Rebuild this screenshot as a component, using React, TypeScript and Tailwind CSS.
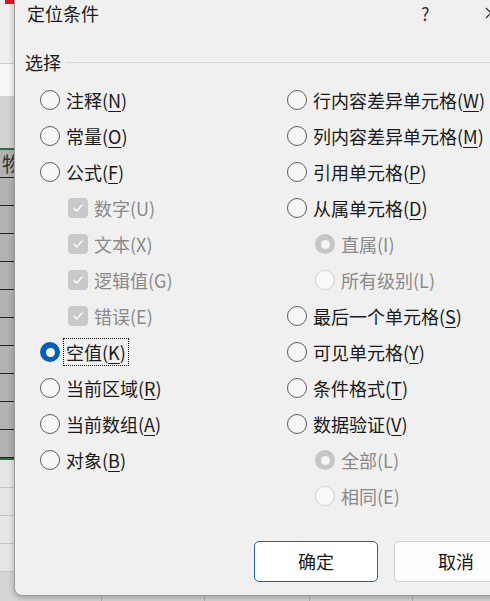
import React from "react";

type RState = "off" | "on" | "disOn" | "disOff";

function Radio({ state }: { state: RState }) {
  if (state === "on")
    return (
      <span className="flex h-[20px] w-[20px] shrink-0 items-center justify-center rounded-full bg-[#005fb8]">
        <span className="h-[9px] w-[9px] rounded-full bg-white" />
      </span>
    );
  if (state === "disOn")
    return (
      <span className="flex h-[20px] w-[20px] shrink-0 items-center justify-center rounded-full bg-[#c6c6c6]">
        <span className="h-[9px] w-[9px] rounded-full bg-[#f4f4f4]" />
      </span>
    );
  if (state === "disOff")
    return <span className="h-[20px] w-[20px] shrink-0 rounded-full border border-[#d2d2d2] bg-[#f9f9f9]" />;
  return <span className="h-[20px] w-[20px] shrink-0 rounded-full border border-[#5c5c5c] bg-[#f6f6f6]" />;
}

function Check() {
  return (
    <span className="flex h-[20px] w-[20px] shrink-0 items-center justify-center rounded-[4px] bg-[#c9c9c9]">
      <svg width="12" height="12" viewBox="0 0 12 12" fill="none">
        <path d="M2 6.3 L4.8 9 L10 3" stroke="#ffffff" strokeWidth="1.3" strokeLinecap="round" strokeLinejoin="round" />
      </svg>
    </span>
  );
}

type Item = {
  text: string;
  k: string;
  kind: "radio" | "check";
  state?: RState;
  sub?: boolean;
  dis?: boolean;
  focus?: boolean;
};

const left: Item[] = [
  { text: "注释", k: "N", kind: "radio", state: "off" },
  { text: "常量", k: "O", kind: "radio", state: "off" },
  { text: "公式", k: "F", kind: "radio", state: "off" },
  { text: "数字", k: "U", kind: "check", sub: true, dis: true },
  { text: "文本", k: "X", kind: "check", sub: true, dis: true },
  { text: "逻辑值", k: "G", kind: "check", sub: true, dis: true },
  { text: "错误", k: "E", kind: "check", sub: true, dis: true },
  { text: "空值", k: "K", kind: "radio", state: "on", focus: true },
  { text: "当前区域", k: "R", kind: "radio", state: "off" },
  { text: "当前数组", k: "A", kind: "radio", state: "off" },
  { text: "对象", k: "B", kind: "radio", state: "off" },
];

const right: Item[] = [
  { text: "行内容差异单元格", k: "W", kind: "radio", state: "off" },
  { text: "列内容差异单元格", k: "M", kind: "radio", state: "off" },
  { text: "引用单元格", k: "P", kind: "radio", state: "off" },
  { text: "从属单元格", k: "D", kind: "radio", state: "off" },
  { text: "直属", k: "I", kind: "radio", state: "disOn", sub: true, dis: true },
  { text: "所有级别", k: "L", kind: "radio", state: "disOff", sub: true, dis: true },
  { text: "最后一个单元格", k: "S", kind: "radio", state: "off" },
  { text: "可见单元格", k: "Y", kind: "radio", state: "off" },
  { text: "条件格式", k: "T", kind: "radio", state: "off" },
  { text: "数据验证", k: "V", kind: "radio", state: "off" },
  { text: "全部", k: "L", kind: "radio", state: "disOn", sub: true, dis: true },
  { text: "相同", k: "E", kind: "radio", state: "disOff", sub: true, dis: true },
];

function Row({ it }: { it: Item }) {
  return (
    <div className={`flex h-[36px] items-center ${it.sub ? "pl-[28px]" : "pl-0"}`}>
      {it.kind === "check" ? <Check /> : <Radio state={it.state ?? "off"} />}
      <span
        className={`ml-[4px] whitespace-nowrap px-[2px] py-[3px] text-[18px] leading-[20px] ${
          it.dis ? "text-[#8a8a8a]" : "text-[#1a1a1a]"
        } ${it.focus ? "outline-1 outline-dotted outline-[#111]" : ""}`}
      >
        {it.text}(
        {it.dis ? it.k : <span className="underline underline-offset-[3px] decoration-1">{it.k}</span>})
      </span>
    </div>
  );
}

const darkRows = [0, 1, 2, 3, 4, 5, 6, 7, 8, 9];

export default function App() {
  return (
    <div className="relative h-[601px] w-[490px] overflow-hidden bg-[#e4e4e4] font-['Noto_Sans_CJK_SC','Noto_Sans',sans-serif]">
      {/* spreadsheet behind */}
      <div className="flex flex-col">
        <div className="h-[64px] border-b border-[#cccccc] bg-[#efefef]">
          <div className="ml-[5px] h-[4px] w-[10px] bg-[#e0161e]" />
        </div>
        <div className="h-[33px] border-b border-[#d0d0d0] bg-[#f8f8f8]" />
        <div className="h-[51px] bg-[#d3d3d3]" />
        <div className="h-[2px] bg-[#217346]" />
        <div className="h-[28px] border-b border-[#222] bg-[#b2b2b2] pl-[2px] text-[20px] leading-[27px] text-[#333] font-['Noto_Sans_CJK_SC',serif]">
          物
        </div>
        {darkRows.map((i) => (
          <div key={i} className="h-[28px] border-b border-[#222] bg-[#b2b2b2]" />
        ))}
        <div className="h-[2px] bg-[#217346]" />
        <div className="h-[28px] border-b border-[#c4c4c4] bg-[#e6e6e6]" />
        <div className="h-[28px] border-b border-[#c4c4c4] bg-[#e6e6e6]" />
        <div className="h-[28px] border-b border-[#c4c4c4] bg-[#e6e6e6]" />
        <div className="h-[28px] border-b border-[#c4c4c4] bg-[#e6e6e6]" />
        <div className="flex h-[40px] bg-[#d6d6d6]">
          <div className="w-[102px] border-r border-[#b4b4b4]" />
          <div className="w-[103px] border-r border-[#b4b4b4]" />
          <div className="w-[105px] border-r border-[#b4b4b4]" />
          <div className="w-[103px] border-r border-[#b4b4b4]" />
        </div>
      </div>

      {/* dialog window */}
      <div className="absolute left-[14px] top-[-8px] flex h-[604px] w-[530px] flex-col rounded-b-[8px] rounded-t-[8px] border border-[#9c9c9c] bg-[#f0f0f0] shadow-[0_2px_6px_rgba(0,0,0,0.25)]">
        <div className="flex h-[36px] items-end pb-[4px]">
          <span className="pl-[12px] text-[18px] leading-[24px] text-[#1a1a1a]">定位条件</span>
          <span className="ml-[322px] text-[18px] leading-[24px] text-[#333]">?</span>
          <svg className="ml-[55px] mb-[6px]" width="12" height="12" viewBox="0 0 12 12">
            <path d="M1 1 L11 11 M11 1 L1 11" stroke="#222" strokeWidth="1.1" />
          </svg>
        </div>
        <div className="mt-[21px] flex h-[24px] items-center pl-[10px]">
          <span className="text-[18px] leading-[24px] text-[#1a1a1a]">选择</span>
          <div className="ml-[5px] h-px flex-1 bg-[#d9d9d9]" />
        </div>
        <div className="mt-[8px] flex">
          <div className="w-[272px] pl-[25px]">
            {left.map((it, i) => (
              <Row key={i} it={it} />
            ))}
          </div>
          <div className="flex-1">
            {right.map((it, i) => (
              <Row key={i} it={it} />
            ))}
          </div>
        </div>
        <div className="mt-[27px] flex pl-[239px]">
          <button className="h-[41px] w-[124px] rounded-[5px] border border-[#1f62ad] bg-white text-[18px] text-[#1a1a1a]">
            确定
          </button>
          <button className="ml-[16px] h-[41px] w-[124px] rounded-[5px] border border-[#d3d3d3] bg-[#fdfdfd] text-[18px] text-[#1a1a1a]">
            取消
          </button>
        </div>
      </div>
    </div>
  );
}
